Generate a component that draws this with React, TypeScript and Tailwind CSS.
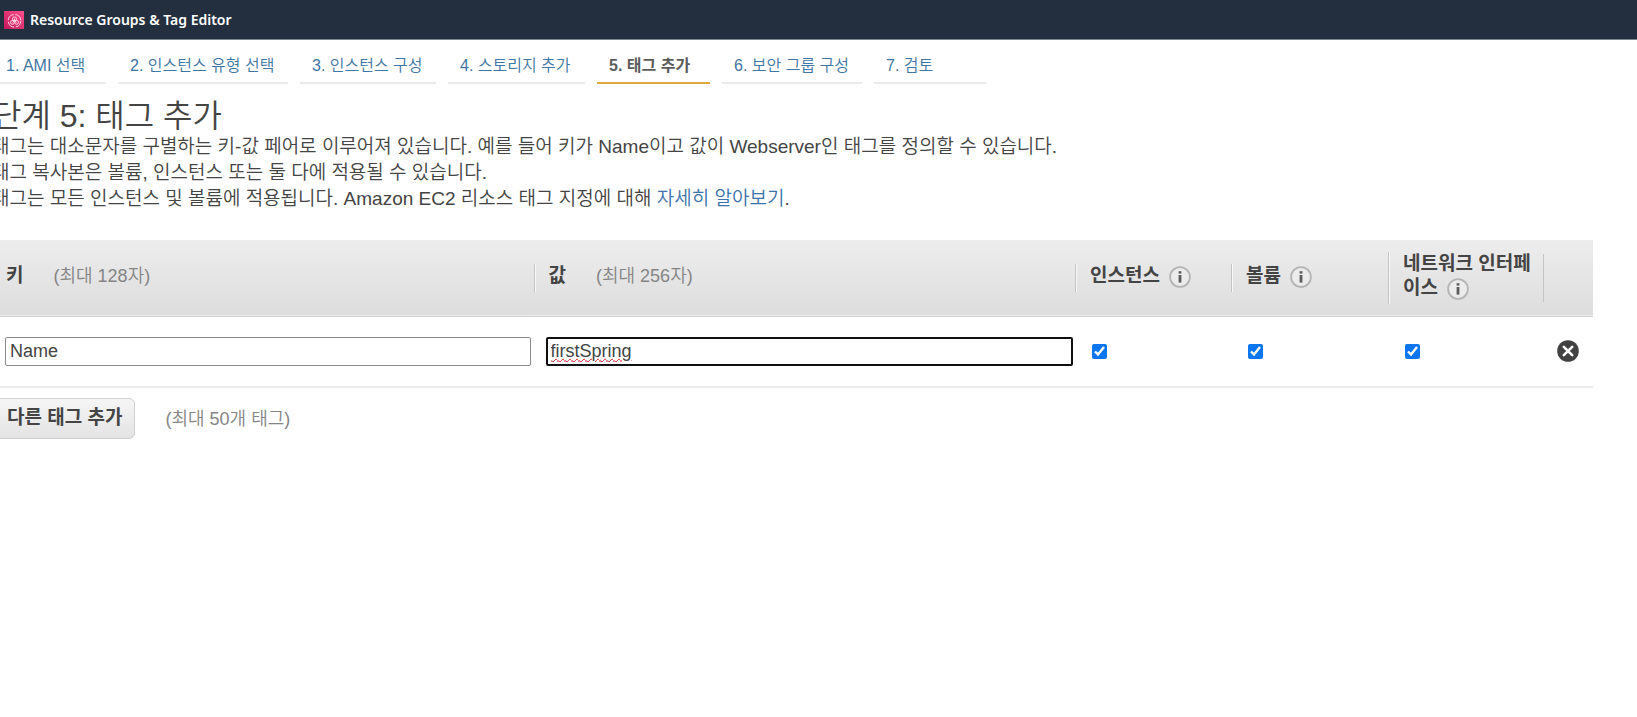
import { useState } from "react";
import { clsx } from "clsx";

const STEPS = [
  { label: "1. AMI 선택", width: "w-[112px]" },
  { label: "2. 인스턴스 유형 선택", width: "w-[170px]" },
  { label: "3. 인스턴스 구성", width: "w-[136px]" },
  { label: "4. 스토리지 추가", width: "w-[137px]" },
  { label: "5. 태그 추가", width: "w-[113px]", active: true },
  { label: "6. 보안 그룹 구성", width: "w-[140px]" },
  { label: "7. 검토", width: "w-[113px]" },
];

const TARGETS = ["인스턴스", "볼륨", "네트워크 인터페이스"];

function ServiceLogo() {
  return (
    <svg width="20" height="18" viewBox="0 0 20 18" className="shrink-0" aria-hidden="true">
      <defs>
        <linearGradient id="logo-bg" x1="0" y1="1" x2="1" y2="0">
          <stop offset="0" stopColor="#c2185b" />
          <stop offset="1" stopColor="#ff4f8b" />
        </linearGradient>
      </defs>
      <rect width="20" height="18" fill="url(#logo-bg)" />
      <g fill="none" stroke="#ffe3ee" strokeWidth="0.9">
        <circle cx="10.5" cy="9.8" r="6.3" strokeDasharray="8.2 1.7" />
        <circle cx="10.5" cy="7.9" r="2" />
        <circle cx="8.4" cy="11.4" r="1.9" />
        <circle cx="12.6" cy="11.4" r="1.9" />
        <path d="M10.5 7.6v2.4l-2 1.4M10.5 10l2 1.4" />
      </g>
    </svg>
  );
}

function InfoIcon() {
  return (
    <svg width="22" height="22" viewBox="0 0 22 22" className="-my-1 ml-1 inline-block align-middle" aria-hidden="true">
      <circle cx="11" cy="11" r="9.9" fill="#ececec" stroke="#b5b5b5" strokeWidth="1.8" />
      <rect x="9.6" y="5.2" width="2.8" height="2.4" fill="#5c5c5c" />
      <path d="M9.6 9h2.8v7.6H9.6z" fill="#5c5c5c" />
    </svg>
  );
}

function RemoveIcon() {
  return (
    <svg width="22" height="22" viewBox="0 0 22 22" aria-hidden="true">
      <circle cx="11" cy="11" r="10.8" fill="#424242" />
      <path d="M6.8 6.8l8.4 8.4M15.2 6.8l-8.4 8.4" stroke="#fff" strokeWidth="2.6" strokeLinecap="round" />
    </svg>
  );
}

function StepNav() {
  return (
    <nav className="-ml-1.5 flex gap-3">
      {STEPS.map((step) => (
        <a
          key={step.label}
          href="#"
          aria-current={step.active ? "step" : undefined}
          className={clsx(
            "h-11 shrink-0 border-b-2 pl-3 pt-3.5 text-base leading-6 whitespace-nowrap",
            step.width,
            step.active ? "border-[#dfa93b] font-bold text-[#5c5c5c]" : "border-[#eaeaea] font-[350] text-[#3f76a3]",
          )}
        >
          {step.label}
        </a>
      ))}
    </nav>
  );
}

function ColumnHeader({ title, hint }: { title: string; hint: string }) {
  return (
    <div className="flex gap-[30px]">
      <span className="text-[19px] font-bold">{title}</span>
      <span className="text-lg leading-6 font-[350] text-[#858585]">{hint}</span>
    </div>
  );
}

export default function App() {
  const [key, setKey] = useState("Name");
  const [value, setValue] = useState("firstSpring");
  const [checked, setChecked] = useState([true, true, true]);

  const toggle = (index: number) => {
    setChecked(checked.map((on, i) => (i === index ? !on : on)));
  };

  return (
    <div className="min-h-screen overflow-x-hidden bg-white font-['Liberation_Sans','Noto_Sans_CJK_KR',sans-serif] text-[#444]">
      <header className="flex h-10 items-center gap-1.5 border-b border-[#7d858e] bg-[#232f3e] pl-1 font-['Noto_Sans',sans-serif] text-sm font-semibold text-white">
        <ServiceLogo />
        <span>Resource Groups &amp; Tag Editor</span>
      </header>

      <StepNav />

      <main className="-ml-2 mr-11">
        <h1 className="mt-4 mb-[2px] text-[32px] leading-8 font-[350]">단계 5: 태그 추가</h1>
        <div className="text-[19px] leading-[26px] font-[350]">
          <p>태그는 대소문자를 구별하는 키-값 페어로 이루어져 있습니다. 예를 들어 키가 Name이고 값이 Webserver인 태그를 정의할 수 있습니다.</p>
          <p>태그 복사본은 볼륨, 인스턴스 또는 둘 다에 적용될 수 있습니다.</p>
          <p>
            태그는 모든 인스턴스 및 볼륨에 적용됩니다. Amazon EC2 리소스 태그 지정에 대해{" "}
            <a href="#" className="text-[#3a72ab]">자세히 알아보기</a>.
          </p>
        </div>

        <table className="mt-7 w-full table-fixed border-collapse text-left">
          <colgroup>
            <col />
            <col />
            <col className="w-[156px]" />
            <col className="w-[157px]" />
            <col className="w-[155px]" />
            <col className="w-[50px]" />
          </colgroup>
          <thead>
            <tr className="h-19 border-b border-[#cfcfcf] bg-linear-to-b from-[#ededed] to-[#dddddd] text-[19px] leading-6">
              <th className="p-0 pb-1 pl-[14px] font-normal">
                <ColumnHeader title="키" hint="(최대 128자)" />
              </th>
              <th className="p-0 font-normal">
                <div className="border-l border-[#c4c4c4] pb-1 pl-[14px] shadow-[inset_1px_0_#f8f8f8]">
                  <ColumnHeader title="값" hint="(최대 256자)" />
                </div>
              </th>
              {TARGETS.map((target) => (
                <th key={target} className="p-0 font-bold">
                  <div className="border-l border-[#c4c4c4] pr-3 pb-1 pl-[14px] break-all shadow-[inset_1px_0_#f8f8f8]">
                    {target} <InfoIcon />
                  </div>
                </th>
              ))}
              <th className="p-0">
                <div className="h-12 border-l border-[#c4c4c4]" />
              </th>
            </tr>
          </thead>
          <tbody>
            <tr className="h-[71px] border-b-2 border-[#ebebeb] text-lg leading-6">
              <td className="p-0 pl-[13px] pr-[3px]">
                <input
                  aria-label="키"
                  value={key}
                  onChange={(e) => setKey(e.target.value)}
                  className="block h-[29px] w-full rounded-xs border border-[#8a8a8a] px-1"
                />
              </td>
              <td className="p-0 pl-3 pr-[2px]">
                <input
                  aria-label="값"
                  value={value}
                  onChange={(e) => setValue(e.target.value)}
                  className="block h-[29px] w-full rounded-xs border-2 border-[#101010] px-[3px] underline decoration-[#e01b24] decoration-wavy decoration-1 outline-none"
                />
              </td>
              {TARGETS.map((target, i) => (
                <td key={target} className="p-0 pl-[17px]">
                  <input
                    type="checkbox"
                    aria-label={target}
                    checked={checked[i]}
                    onChange={() => toggle(i)}
                    className="block size-[15px] accent-[#0b76ef]"
                  />
                </td>
              ))}
              <td className="p-0 pl-[14px]">
                <button type="button" aria-label="태그 삭제" className="block">
                  <RemoveIcon />
                </button>
              </td>
            </tr>
          </tbody>
        </table>

        <div className="mt-[10px] flex items-center gap-[30px]">
          <button
            type="button"
            className="h-[41px] rounded-md border border-[#cfcfcf] bg-linear-to-b from-[#f6f6f6] to-[#e3e3e3] pr-3 pl-[14px] text-[19px] font-bold"
          >
            다른 태그 추가
          </button>
          <span className="text-lg font-[350] text-[#858585]">(최대 50개 태그)</span>
        </div>
      </main>
    </div>
  );
}
